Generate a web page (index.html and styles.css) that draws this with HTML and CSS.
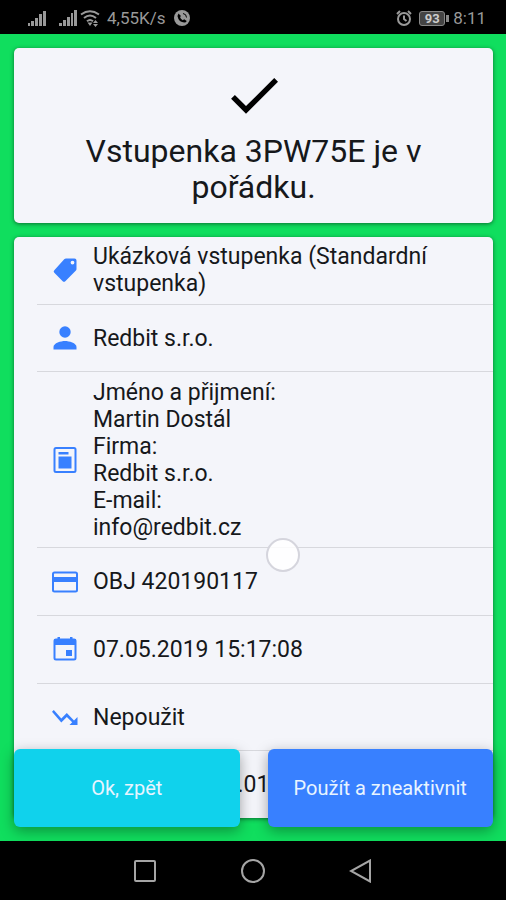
FILE: index.html
```html
<!DOCTYPE html>
<html lang="cs">
<head>
<meta charset="utf-8">
<meta name="viewport" content="width=device-width, initial-scale=1">
<title>Vstupenka</title>
<link rel="stylesheet" href="styles.css">
</head>
<body>
<header class="status">
  <div class="status-group">
    <svg class="signal" width="18" height="16" viewBox="0 0 18 16"><path d="M0 13h2v3H0zM3 11h3v5H3zM7 8h3v8H7zM11 4h3v12h-3zM15 1h3v15h-3z"/></svg>
    <svg class="signal-wide" width="18" height="16" viewBox="0 0 18 16"><path d="M0 13h3v3H0zM4 10h3v6H4zM8 7h3v9H8zM12 3h2v13h-2zM15 0h3v16h-3z"/></svg>
    <svg width="20" height="17" viewBox="0 0 20 17"><path class="line" d="M1 4.5Q10-2 19 4.5M4 8q6-5 12 0M7 11.2q3-2.5 6 0"/><path d="M7.500 12.500h5L10 16zM13 13l2.500-3 2.500 3zM13 14h5l-2.500 3z"/></svg>
    <span class="speed">4,55K/s</span>
    <svg class="call" width="16" height="16" viewBox="0 0 16 16"><circle cx="8" cy="8" r="8"/><path class="cut" d="M4.500 3.500Q3 5 4.200 8.500t6 4q2 0 2.500-1.500l-2.500-1.700-1.500 1Q6.500 9 6 7L7 6z"/><path class="cut-line" d="M9 3.500q3.500.5 3.500 4"/></svg>
  </div>
  <div class="status-group">
    <svg width="16" height="16" viewBox="0 0 16 16"><circle class="line" cx="8" cy="9" r="6"/><path class="line" d="M8 5.500V9l2.500 2M1 4l3-3M15 4l-3-3"/></svg>
    <span class="battery">93</span>
    <span class="clock">8:11</span>
  </div>
</header>

<main class="app">
  <section class="card result">
    <svg width="64" height="64" viewBox="0 0 24 24"><path d="M9 16.170 4.830 12l-1.420 1.410L9 19 21 7l-1.410-1.410z"/></svg>
    <h1>Vstupenka 3PW75E je v pořádku.</h1>
  </section>

  <ul class="card details">
    <li>
      <svg class="icon" viewBox="0 0 28 28"><path fill-rule="evenodd" d="M15 2.500h8.500a2 2 0 0 1 2 2V13q0 1-.8 1.800L14.300 25.200q-1.300 1.300-2.600 0l-8.400-8.400q-1.300-1.300 0-2.600L13.200 3.300Q14 2.500 15 2.500zM21.500 4.700a1.900 1.900 0 1 0 0 3.800 1.900 1.900 0 0 0 0-3.800z"/></svg>
      <span>Ukázková vstupenka (Standardní vstupenka)</span>
    </li>
    <li>
      <svg class="icon" viewBox="0 0 28 28"><circle cx="14" cy="8" r="5.700"/><path d="M2.500 25.500v-2.500c0-4 7.500-6 11.500-6s11.500 2 11.500 6v2.500z"/></svg>
      <span>Redbit s.r.o.</span>
    </li>
    <li class="tall">
      <svg class="icon" viewBox="0 0 28 28"><rect class="stroke" x="3.500" y="2" width="21" height="24" rx="1.500"/><path d="M7.500 6h10v2.500h-10zM7.500 10.500h13v12h-13z"/></svg>
      <span>Jméno a přijmení:<br>Martin Dostál<br>Firma:<br>Redbit s.r.o.<br>E-mail:<br>info@redbit.cz</span>
    </li>
    <li>
      <svg class="icon" viewBox="0 0 28 28"><rect class="stroke" x="2" y="4.500" width="24" height="19" rx="1.500"/><path d="M2 9h24v5H2z"/></svg>
      <span>OBJ 420190117</span>
    </li>
    <li>
      <svg class="icon" viewBox="0 0 28 28"><rect class="stroke" x="3.500" y="4.500" width="21" height="20" rx="1.500"/><path d="M3 4h22v6H3zM6.500 2h2.500v3H6.500zM19 2h2.500v3H19zM15 15h6v6h-6z"/></svg>
      <span>07.05.2019 15:17:08</span>
    </li>
    <li>
      <svg class="icon" viewBox="0 0 28 28"><path d="m18.500 22 2.700-2.700-5.400-5.400-5.500 5.500L1 8.800l1.800-1.800 7.500 8.500 5.500-5.500 7.200 7.500L26.500 14v8z"/></svg>
      <span>Nepoužit</span>
    </li>
    <li class="partial"><span>.01</span></li>
  </ul>

  <div class="actions">
    <button class="back" type="button">Ok, zpět</button>
    <button class="use" type="button">Použít a zneaktivnit</button>
  </div>
  <div class="touch"></div>
</main>

<nav class="system">
  <button type="button" aria-label="Přehled"><svg width="24" height="24" viewBox="0 0 24 24"><rect x="2" y="2" width="20" height="20" rx="1"/></svg></button>
  <button type="button" aria-label="Domů"><svg width="24" height="24" viewBox="0 0 24 24"><circle cx="12" cy="12" r="11"/></svg></button>
  <button type="button" aria-label="Zpět"><svg width="24" height="24" viewBox="0 0 24 24"><path d="M21 1.500v21L2 12z"/></svg></button>
</nav>
</body>
</html>
```

FILE: styles.css
```css
* {
  box-sizing: border-box;
}

body {
  margin: 0;
  min-height: 100vh;
  display: flex;
  flex-direction: column;
  background: #000;
  color: #16181b;
  font-family: Roboto, sans-serif;
}

.status {
  height: 34px;
  padding: 2px 20px 0 28px;
  display: flex;
  justify-content: space-between;
  align-items: center;
  color: #999;
  font-size: 17px;
}

.status-group {
  display: flex;
  align-items: center;
}

.status svg {
  fill: #999;
}

.status .line {
  fill: none;
  stroke: #999;
  stroke-width: 2;
}

.status .cut {
  fill: #000;
}

.status .cut-line {
  fill: none;
  stroke: #000;
}

.signal-wide {
  margin: 0 3px 0 13px;
}

.speed {
  margin: 0 9px 0 7px;
}

.battery {
  position: relative;
  width: 26px;
  height: 15px;
  margin: 0 8px 0 7px;
  border: 1px solid #888;
  border-radius: 3px;
  background: #444;
  color: #ccc;
  font-size: 13px;
  font-weight: 700;
  line-height: 13px;
  text-align: center;
}

.battery::after {
  content: "";
  position: absolute;
  left: 26px;
  top: 3px;
  width: 3px;
  height: 7px;
  background: #888;
}

.app {
  position: relative;
  flex: 1;
  display: flex;
  flex-direction: column;
  gap: 14px;
  padding: 14px 13px 23px 14px;
  background: #10de5e;
}

.card {
  margin: 0;
  border-radius: 5px;
  background: #f4f5fa;
  box-shadow: 0 1px 4px rgba(0, 0, 0, 0.5);
}

.result {
  padding: 15px 56px 18px;
  text-align: center;
}

.result svg {
  display: block;
  margin: 0 auto;
  fill: #000;
}

.result h1 {
  margin: 6px 0 0;
  font-size: 32px;
  font-weight: 400;
  line-height: 36px;
}

.details {
  flex: 1;
  display: flex;
  flex-direction: column;
  padding: 0 0 0 23px;
  list-style: none;
  font-size: 23px;
  line-height: 27px;
}

.details li {
  flex: 1 1 0px;
  display: flex;
  align-items: center;
  gap: 14px;
  padding: 0 56px 0 14px;
  border-bottom: 1px solid #d7d8dd;
}

.details .tall {
  flex: none;
  padding-top: 7px;
  padding-bottom: 6px;
}

.details .partial {
  justify-content: center;
  padding: 0 23px 0 0;
  border-bottom: 0;
}

.icon {
  flex: none;
  width: 28px;
  height: 28px;
  fill: #3880ff;
}

.icon .stroke {
  fill: none;
  stroke: #3880ff;
  stroke-width: 2;
}

.actions {
  position: absolute;
  left: 14px;
  right: 13px;
  bottom: 14px;
  display: grid;
  grid-template-columns: 1fr 1fr;
  gap: 28px;
}

.actions button {
  height: 78px;
  padding: 0;
  border: 0;
  border-radius: 6px;
  box-shadow: 0 4px 14px rgba(0, 0, 0, 0.35);
  color: #e8f4ff;
  font-family: inherit;
  font-size: 20px;
}

.actions .back {
  background: #10d2ec;
}

.actions .use {
  background: #3880ff;
}

.touch {
  position: absolute;
  left: 266px;
  top: 504px;
  width: 34px;
  height: 34px;
  border: 2px solid #d5d5dd;
  border-radius: 50%;
  background: rgba(255, 255, 255, 0.85);
}

.system {
  height: 59px;
  display: flex;
  justify-content: center;
  align-items: center;
  gap: 84px;
}

.system button {
  width: 24px;
  height: 24px;
  padding: 0;
  border: 0;
  background: none;
}

.system svg {
  display: block;
  fill: none;
  stroke: #a5a5a5;
  stroke-width: 2;
}
```
